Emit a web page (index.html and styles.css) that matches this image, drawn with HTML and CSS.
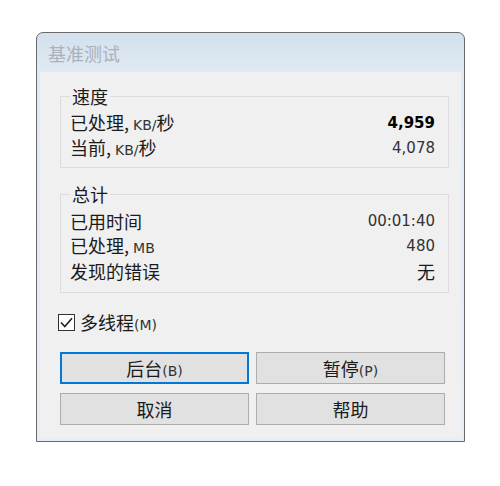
FILE: index.html
```html
<!DOCTYPE html>
<html lang="zh-CN">
<head>
  <meta charset="UTF-8">
  <meta name="viewport" content="width=device-width, initial-scale=1.0">
  <link rel="stylesheet" href="styles.css">
</head>
<body>
  <div class="window">
    <div class="title-bar">基准测试</div>
    <div class="content">
      <!-- 速度 -->
      <fieldset class="group group-speed">
        <legend>速度</legend>
        <div class="row">
          <span>已处理, <span class="lat">KB/</span>秒</span>
          <span class="num bold">4,959</span>
        </div>
        <div class="row">
          <span>当前, <span class="lat">KB/</span>秒</span>
          <span class="num">4,078</span>
        </div>
      </fieldset>
      <!-- 总计 -->
      <fieldset class="group group-total">
        <legend>总计</legend>
        <div class="row">
          <span>已用时间</span>
          <span class="num">00:01:40</span>
        </div>
        <div class="row">
          <span>已处理, <span class="lat">MB</span></span>
          <span class="num">480</span>
        </div>
        <div class="row">
          <span>发现的错误</span>
          <span>无</span>
        </div>
      </fieldset>
      <!-- 多线程 -->
      <label class="check-row">
        <span class="check-box">
          <svg width="13" height="11" viewBox="0 0 13 11"><path d="M1 5.5 L4.8 9.5 L12 1.2" fill="none" stroke="#222" stroke-width="1.6"/></svg>
        </span>
        <span>多线程<span class="lat">(M)</span></span>
      </label>
      <!-- 按钮 -->
      <div class="buttons">
        <button class="btn btn-focus" type="button">后台<span class="lat">(B)</span></button>
        <button class="btn" type="button">暂停<span class="lat">(P)</span></button>
        <button class="btn" type="button">取消</button>
        <button class="btn" type="button">帮助</button>
      </div>
    </div>
  </div>
</body>
</html>
```

FILE: styles.css
```css
body, html {
  margin: 0;
  padding: 0;
  background: #fff;
}

body {
  font-family: "Noto Sans CJK SC", sans-serif;
  font-size: 18px;
  color: #1a1a1a;
}

.window {
  box-sizing: border-box;
  width: 429px;
  height: 410px;
  margin: 32px 0 0 36px;
  border: 1px solid #6a6a6a;
  border-radius: 7px 7px 0 0;
  background: linear-gradient(#d3e0ed, #e0eaf4 40px, #e6eef6);
  padding: 0 3px 3px;
  display: flex;
  flex-direction: column;
}

.title-bar {
  height: 39px;
  padding-left: 8px;
  display: flex;
  align-items: center;
  color: #a9b1ba;
  font-size: 18px;
}

.content {
  flex: 1;
  background: #f0f0f0;
  padding: 0 12px 0 20px;
}

.group {
  margin: 0;
  border: 1px solid #dcdcdc;
  padding: 4px 13px 6px 9px;
  min-width: 0;
}

.group-speed {
  margin-top: 13px;
}

.group-total {
  margin-top: 15px;
  padding-bottom: 8px;
}

legend {
  padding: 0 2px;
  line-height: 22px;
}

.row {
  display: flex;
  justify-content: space-between;
  align-items: center;
  height: 25px;
  line-height: 25px;
}

.lat {
  font-family: "DejaVu Sans", sans-serif;
  font-size: 14px;
  color: #333;
}

.num {
  font-family: "DejaVu Sans", sans-serif;
  font-size: 15px;
  color: #333;
}

.bold {
  font-weight: bold;
  color: #000;
}

.check-row {
  display: flex;
  align-items: center;
  gap: 5px;
  height: 24px;
  margin: 17px 0 0 -2px;
}

.check-box {
  box-sizing: border-box;
  width: 17px;
  height: 17px;
  border: 1px solid #333;
  background: #fff;
  display: flex;
  align-items: center;
  justify-content: center;
}

.buttons {
  display: grid;
  grid-template-columns: 1fr 1fr;
  column-gap: 7px;
  row-gap: 9px;
  margin: 18px 4px 0 0;
}

.btn {
  height: 32px;
  padding: 0;
  border: 1px solid #adadad;
  background: #e1e1e1;
  font-family: "Noto Sans CJK SC", sans-serif;
  font-size: 18px;
  color: #1a1a1a;
}

.btn-focus {
  border: 2px solid #0078d7;
}
```
